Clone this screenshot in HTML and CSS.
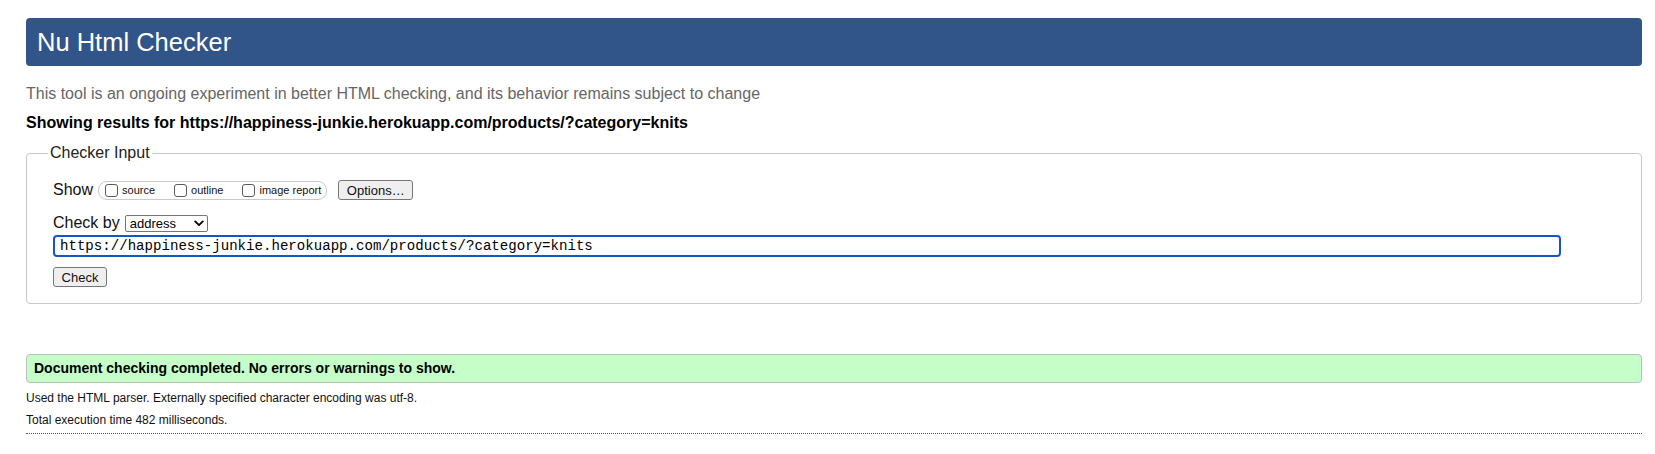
FILE: index.html
```html
<!DOCTYPE html>
<html lang="en">
<head>
<meta charset="utf-8">
<title>Showing results for https://happiness-junkie.herokuapp.com/products/?category=knits - Nu Html Checker</title>
<link rel="stylesheet" href="styles.css">
</head>
<body>
<h1 class="title">Nu Html Checker</h1>
<p class="intro">This tool is an ongoing experiment in better HTML checking, and its behavior remains subject to change</p>
<p class="showing">Showing results for https://happiness-junkie.herokuapp.com/products/?category=knits</p>
<form class="checker-form">
  <fieldset class="checker">
    <legend class="checker-legend">Checker Input</legend>
    <div class="show-row">
      <span class="row-label">Show</span>
      <fieldset class="opts">
        <label class="opt"><input class="cb" type="checkbox">source</label>
        <label class="opt"><input class="cb" type="checkbox">outline</label>
        <label class="opt"><input class="cb" type="checkbox">image report</label>
      </fieldset>
      <button type="button" class="btn btn-options">Options…</button>
    </div>
    <div class="by-row">
      <span class="row-label">Check by</span>
      <span class="select-wrap">
        <select class="select"><option>address</option></select>
        <svg class="chev" width="10" height="7" viewBox="0 0 10 7"><path d="M1.2 1.4 L5 5.2 L8.8 1.4" fill="none" stroke="#000" stroke-width="1.8" stroke-linecap="round" stroke-linejoin="round"/></svg>
      </span>
    </div>
    <div class="url-row">
      <input class="url" type="url" value="https://happiness-junkie.herokuapp.com/products/?category=knits">
    </div>
    <div class="submit-row">
      <button type="button" class="btn btn-check">Check</button>
    </div>
  </fieldset>
</form>
<p class="success">Document checking completed. No errors or warnings to show.</p>
<p class="details">Used the HTML parser. Externally specified character encoding was utf-8.</p>
<p class="details">Total execution time 482 milliseconds.</p>
<hr class="dots">
</body>
</html>
```
FILE: styles.css
```css
* { box-sizing: border-box; }

body {
  margin: 0;
  padding: 18px 13px 0 26px;
  font-family: "Liberation Sans", Arial, Helvetica, sans-serif;
  color: #000;
  background: #fff;
}

.title {
  margin: 0;
  height: 48px;
  padding-left: 11px;
  background: #325589;
  color: #fff;
  font-weight: normal;
  font-size: 25.5px;
  line-height: 48px;
  border-radius: 4px;
}

.intro {
  margin: 19px 0 0;
  font-size: 16px;
  line-height: 18px;
  color: #666;
}

.showing {
  margin: 11px 0 0;
  font-size: 16px;
  line-height: 18px;
  font-weight: bold;
}

.checker-form { margin: 12px 0 0; }

.checker {
  margin: 0;
  min-width: 0;
  border: 1px solid #c9c9c9;
  border-radius: 4px;
  padding: 0 26px 16px;
}

.checker-legend {
  margin-left: -5px;
  padding: 0 2px;
  font-size: 16px;
  line-height: 18px;
  color: #222;
}

.row-label {
  font-size: 16px;
  color: #111;
}

.show-row {
  display: flex;
  align-items: center;
  height: 20px;
  margin-top: 18px;
}

.opts {
  display: inline-flex;
  align-items: center;
  gap: 19px;
  height: 19px;
  margin: 0 0 0 5px;
  padding: 0 5px 0 6px;
  min-width: 0;
  border: 1px solid #c9c9c9;
  border-radius: 9px;
}

.opt {
  display: inline-flex;
  align-items: center;
  font-size: 11px;
  color: #111;
}

.cb {
  appearance: none;
  -webkit-appearance: none;
  width: 13px;
  height: 13px;
  margin: 0 4px 0 0;
  border: 1px solid #5a5a5a;
  border-radius: 3px;
  background: #fff;
}

.btn {
  height: 20px;
  padding: 0 6px;
  font-family: "Liberation Sans", Arial, Helvetica, sans-serif;
  font-size: 13px;
  color: #111;
  background: #efefef;
  border: 1px solid #767676;
  border-radius: 3px;
}

.btn-options {
  margin-left: 11px;
  width: 75px;
}

.btn-check { width: 54px; }

.by-row {
  display: flex;
  align-items: center;
  height: 18px;
  margin-top: 14px;
}

.select-wrap {
  position: relative;
  display: inline-flex;
  margin-left: 5px;
}

.select {
  appearance: none;
  -webkit-appearance: none;
  width: 83px;
  height: 17px;
  margin: 0;
  padding: 0 0 0 4px;
  font-family: "Liberation Sans", Arial, Helvetica, sans-serif;
  font-size: 13px;
  line-height: 15px;
  color: #000;
  background: #fff;
  border: 1px solid #767676;
  border-radius: 2px;
}

.chev {
  position: absolute;
  right: 4px;
  top: 5px;
  pointer-events: none;
}

.url-row { margin-top: 3px; }

.url {
  display: block;
  width: 1508px;
  height: 22px;
  margin: 0;
  padding: 0 5px;
  font-family: "Liberation Mono", "Courier New", monospace;
  font-size: 14.1px;
  color: #000;
  background: #fff;
  border: 2px solid #1357c6;
  border-radius: 4px;
  outline: none;
}

.submit-row { margin-top: 10px; }

.success {
  margin: 50px 0 0;
  height: 29px;
  padding: 0 7px;
  font-size: 14px;
  font-weight: bold;
  line-height: 27px;
  background: #c5fec8;
  border: 1px solid #bdbdbd;
  border-radius: 4px;
}

.details {
  margin: 8px 0 0;
  font-size: 12px;
  line-height: 15px;
  color: #111;
}

.details + .details { margin-top: 7px; }

.dots {
  margin: 5px 0 0;
  height: 0;
  border: 0;
  border-top: 1px dotted #555;
}
```
